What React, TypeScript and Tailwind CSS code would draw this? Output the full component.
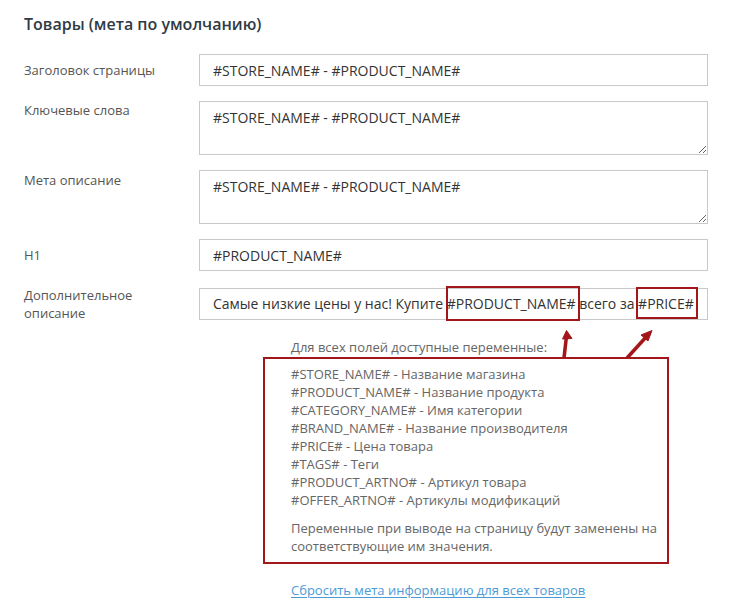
import React from 'react';

const vars = [
  '#STORE_NAME# - Название магазина',
  '#PRODUCT_NAME# - Название продукта',
  '#CATEGORY_NAME# - Имя категории',
  '#BRAND_NAME# - Название производителя',
  '#PRICE# - Цена товара',
  '#TAGS# - Теги',
  '#PRODUCT_ARTNO# - Артикул товара',
  '#OFFER_ARTNO# - Артикулы модификаций',
];

const inputCls =
  'w-[509px] border border-[#c9c9c9] bg-white px-[13px] text-[14px] text-[#333] outline-none';

const Row = ({ label, children, labelCls }: { label: React.ReactNode; children: React.ReactNode; labelCls: string }) => (
  <div className="flex">
    <div className={`w-[175px] shrink-0 text-[13px] leading-[18px] text-[#555] ${labelCls}`}>{label}</div>
    {children}
  </div>
);

// red annotation frame around a piece of text
const Mark = ({ children, cls }: { children: React.ReactNode; cls: string }) => (
  <span className="relative">
    {children}
    <span className={`pointer-events-none absolute border-2 border-[#a3171a] ${cls}`} />
  </span>
);

export default function App() {
  return (
    <div
      className="relative h-[607px] w-[740px] overflow-hidden bg-white px-6"
      style={{ fontFamily: '"Open Sans", "Noto Sans", sans-serif' }}
    >
      <h2 className="pt-[13px] text-[16px] font-semibold leading-[22px] text-[#2f3a45]">Товары (мета по умолчанию)</h2>

      <div className="mt-[19px] flex flex-col">
        <Row label="Заголовок страницы" labelCls="pt-[7px]">
          <input readOnly className={`${inputCls} h-[32px]`} value="#STORE_NAME# - #PRODUCT_NAME#" />
        </Row>
        <div className="h-[15px]" />
        <Row label="Ключевые слова" labelCls="pt-0">
          <textarea readOnly className={`${inputCls} block h-[54px] resize-y py-[6px] leading-[20px]`} value="#STORE_NAME# - #PRODUCT_NAME#" />
        </Row>
        <div className="h-[15px]" />
        <Row label="Мета описание" labelCls="pt-[1px]">
          <textarea readOnly className={`${inputCls} block h-[54px] resize-y py-[6px] leading-[20px]`} value="#STORE_NAME# - #PRODUCT_NAME#" />
        </Row>
        <div className="h-[15px]" />
        <Row label="H1" labelCls="pt-[7px]">
          <input readOnly className={`${inputCls} h-[32px]`} value="#PRODUCT_NAME#" />
        </Row>
        <div className="h-[17px]" />
        <Row label={<>Дополнительное<br />описание</>} labelCls="-mt-[2px]">
          <div className={`${inputCls} h-[32px] whitespace-nowrap leading-[30px]`}>
            Самые низкие цены у нас! Купите{' '}
            <Mark cls="-left-[1px] -right-[4px] -top-[8px] -bottom-[8px]">#PRODUCT_NAME#</Mark>{' '}
            всего за{' '}
            <Mark cls="-left-[2px] -right-[4px] -top-[7px] -bottom-[6px]">#PRICE#</Mark>
          </div>
        </Row>
      </div>

      <div className="ml-[267px] mt-[16px] text-[13px] leading-[18px] text-[#666]">Для всех полей доступные переменные:</div>
      <div className="ml-[239px] mt-[1px] w-[406px] border-2 border-[#a3171a] pb-[7px] pl-[26px] pt-[6px] text-[13px] leading-[18px] text-[#666]">
        {vars.map((v) => (
          <div key={v}>{v}</div>
        ))}
        <p className="mt-[10px]">Переменные при выводе на страницу будут заменены на соответствующие им значения.</p>
      </div>

      <div className="ml-[267px] mt-[17px] text-[13px] leading-[18px]">
        <a href="#" className="text-[#4d9bd6] underline underline-offset-2">Сбросить мета информацию для всех товаров</a>
      </div>

      <svg className="pointer-events-none absolute left-0 top-0" width="740" height="607" viewBox="0 0 740 607">
        <g fill="#a3171a" stroke="#a3171a" strokeLinejoin="round">
          <line x1="564" y1="358" x2="566.5" y2="336" strokeWidth="3.5" />
          <polygon points="566.5,330.5 562.5,339 572,338.5" strokeWidth="1" />
          <line x1="627" y1="358" x2="647" y2="336" strokeWidth="3.5" />
          <polygon points="652,330.5 641,335 648,341" strokeWidth="1" />
        </g>
      </svg>
    </div>
  );
}
